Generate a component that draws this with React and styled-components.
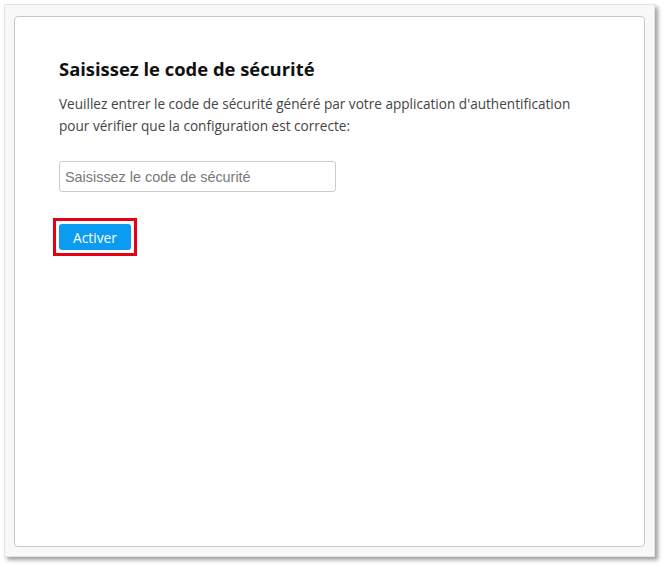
import React from "react";
import styled, { createGlobalStyle } from "styled-components";

const GlobalStyle = createGlobalStyle`
  html, body {
    margin: 0;
    padding: 0;
    background: #ffffff;
  }
  body {
    font-family: "Open Sans", "Noto Sans", sans-serif;
  }
`;

const Page = styled.div`
  width: 664px;
  height: 567px;
  padding: 4px 0 0 4px;
  box-sizing: border-box;
`;

const Frame = styled.div`
  width: 651px;
  height: 553px;
  box-sizing: border-box;
  background: #f8f8f8;
  border: 1px solid #e4e4e4;
  box-shadow: 3px 3px 4px rgba(0, 0, 0, 0.38);
  padding: 11px 0 0 9px;
`;

const Card = styled.section`
  width: 631px;
  height: 531px;
  box-sizing: border-box;
  background: #ffffff;
  border: 1px solid #c8c8c8;
  border-radius: 4px;
  padding: 38px 44px;
  display: flex;
  flex-direction: column;
  align-items: flex-start;
`;

const Title = styled.h2`
  margin: 0;
  font-family: "Open Sans", "Noto Sans", sans-serif;
  font-size: 18.4px;
  font-weight: 700;
  line-height: 28px;
  color: #111111;
`;

const Intro = styled.p`
  margin: 10px 0 0;
  font-size: 13.6px;
  line-height: 22px;
  color: #444444;
  max-width: 530px;
`;

const CodeInput = styled.input`
  margin-top: 24px;
  width: 277px;
  height: 31px;
  box-sizing: border-box;
  border: 1px solid #cccccc;
  border-radius: 3px;
  padding: 0 5px;
  font-family: "Liberation Sans", Arial, sans-serif;
  font-size: 14.4px;
  color: #333333;
  outline: none;
  &::placeholder {
    color: #777777;
  }
`;

const Highlight = styled.div`
  margin-top: 26px;
  margin-left: -6px;
  border: 3px solid #e60012;
  padding: 3px;
  display: flex;
`;

const PrimaryButton = styled.button`
  width: 72px;
  height: 26px;
  border: none;
  border-radius: 3px;
  background: #0b9bf0;
  color: #ffffff;
  font-family: "Open Sans", "Noto Sans", sans-serif;
  font-size: 13.8px;
  padding: 0;
  cursor: pointer;
`;

export default function App() {
  return (
    <>
      <GlobalStyle />
      <Page>
        <Frame>
          <Card>
            <Title>Saisissez le code de sécurité</Title>
            <Intro>
              Veuillez entrer le code de sécurité généré par votre application d'authentification
              pour vérifier que la configuration est correcte:
            </Intro>
            <CodeInput type="text" placeholder="Saisissez le code de sécurité" />
            <Highlight>
              <PrimaryButton type="button">Activer</PrimaryButton>
            </Highlight>
          </Card>
        </Frame>
      </Page>
    </>
  );
}
